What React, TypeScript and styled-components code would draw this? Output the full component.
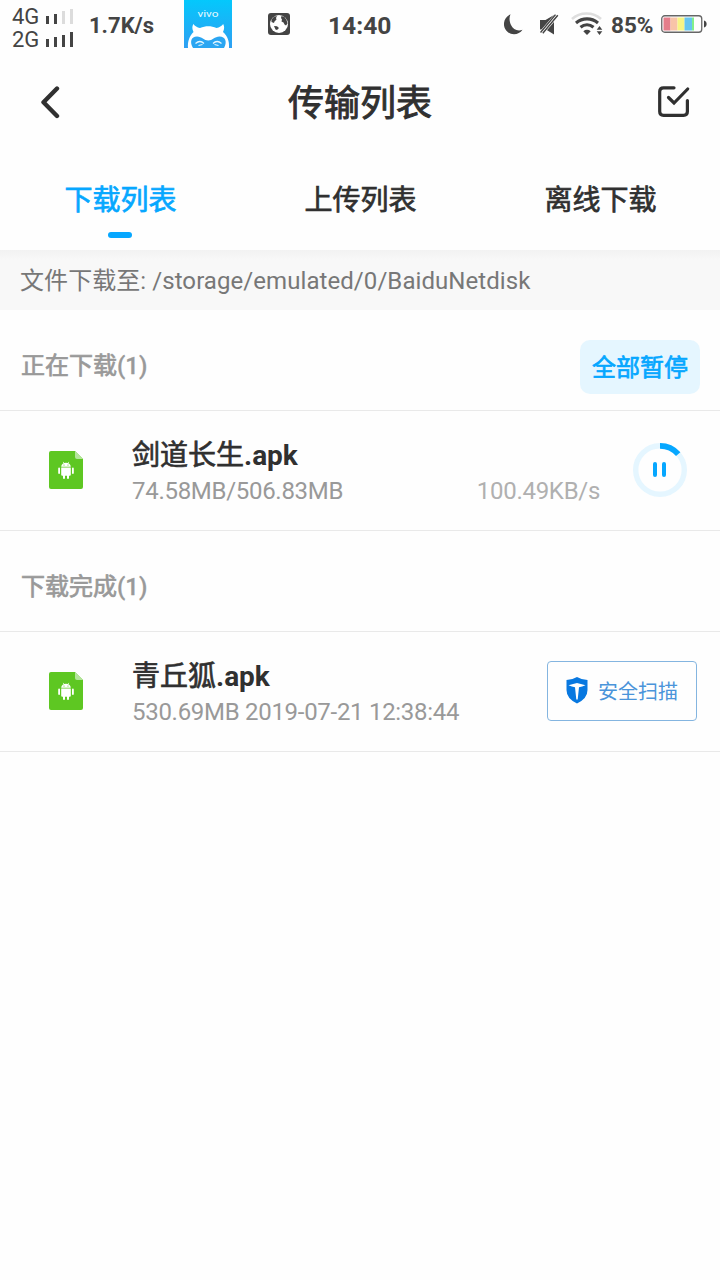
import React from 'react';
import styled, { createGlobalStyle } from 'styled-components';

const GlobalStyle = createGlobalStyle`
  * { box-sizing: border-box; }
  body {
    margin: 0;
    background: #fefefe;
    font-family: Roboto, "Noto Sans CJK SC", sans-serif;
    color: #303030;
  }
  svg { display: block; flex: none; }
`;

const Screen = styled.div`
  width: 720px;
  height: 1280px;
  overflow: hidden;
  background: #fefefe;
`;

/* Medium-weight Chinese text: the regular face with a thin outline. */
const Han = styled.span<{ $stroke?: number }>`
  font-weight: 400;
  -webkit-text-stroke: ${(p) => p.$stroke ?? 0.7}px currentColor;
`;

const StatusBar = styled.div`
  display: flex;
  align-items: flex-start;
  height: 50px;
  padding-left: 12px;
  color: #444;
`;

const StatusItem = styled.div<{ $w: number; $top: number; $left?: number }>`
  flex: none;
  width: ${(p) => p.$w}px;
  margin-top: ${(p) => p.$top}px;
  margin-left: ${(p) => p.$left ?? 0}px;
`;

const StatusText = styled(StatusItem)<{ $size: number }>`
  font-size: ${(p) => p.$size}px;
  line-height: 30px;
  font-weight: 700;
  white-space: nowrap;
`;

const SignalRow = styled.div`
  display: flex;
  align-items: center;
  height: 23px;
  font-size: 22px;
  line-height: 23px;
`;

const SignalName = styled.span`
  width: 34px;
`;

const Bars = styled.div`
  display: flex;
  align-items: flex-end;
  gap: 5px;
  height: 15px;
`;

const Bar = styled.i<{ $h: number; $off?: boolean }>`
  width: 3px;
  height: ${(p) => p.$h}px;
  background: ${(p) => (p.$off ? '#dcdcdc' : '#444')};
`;

const Header = styled.header`
  display: flex;
  align-items: center;
  justify-content: space-between;
  height: 104px;
  padding: 0 28px 0 39px;
`;

const Title = styled.h1`
  margin: 0;
  padding: 4px 0 0 1px;
  font-size: 36px;
  line-height: 52px;
`;

const Tabs = styled.nav`
  display: grid;
  grid-template-columns: repeat(3, 1fr);
  height: 96px;
`;

const Tab = styled.div<{ $active?: boolean }>`
  display: flex;
  flex-direction: column;
  align-items: center;
  padding: 27px 0 0 1px;
  font-size: 28px;
  line-height: 40px;
  color: ${(p) => (p.$active ? '#06a7ff' : '#303030')};
`;

const Indicator = styled.i`
  width: 24px;
  height: 6px;
  margin: 11px 1px 0 0;
  border-radius: 3px;
  background: #06a7ff;
`;

const PathBar = styled.div`
  height: 60px;
  padding: 1px 20px 0;
  background: linear-gradient(#f2f2f2, #f8f8f8 10px);
  font-size: 24px;
  line-height: 60px;
  letter-spacing: 0.07px;
  color: #777;
  white-space: nowrap;
`;

const Section = styled.div`
  display: flex;
  align-items: center;
  justify-content: space-between;
  height: 101px;
  padding: 13px 20px 0 21px;
  border-bottom: 1px solid #e9e9e9;
`;

const SectionTitle = styled.div`
  padding-bottom: 2px;
  font-size: 24px;
  line-height: 36px;
  font-weight: 500;
  color: #999;
  -webkit-text-stroke: 0.3px currentColor;
`;

const PauseAll = styled.button`
  width: 120px;
  height: 54px;
  padding: 2px 0 0;
  border: 0;
  border-radius: 10px;
  background: #e5f6ff;
  color: #06a7ff;
  font-family: inherit;
  font-size: 24px;
  line-height: 52px;
`;

const FileRow = styled.div`
  display: flex;
  align-items: center;
  height: 120px;
  padding: 0 23px 2px 49px;
  border-bottom: 1px solid #e9e9e9;
`;

const FileInfo = styled.div`
  flex: 1;
  margin-left: 49px;
`;

const FileName = styled.div`
  padding-top: 3px;
  font-size: 28px;
  line-height: 39px;
  font-weight: 700;
  white-space: nowrap;
`;

const FileMeta = styled.div`
  display: flex;
  justify-content: space-between;
  font-size: 24px;
  line-height: 32px;
  letter-spacing: -0.29px;
  color: #999;
  white-space: nowrap;
`;

const Speed = styled.span`
  color: #b0b0b0;
`;

const ProgressBox = styled.div`
  margin-left: 33px;
  margin-right: 10px;
`;

const ScanButton = styled.button`
  display: flex;
  align-items: center;
  flex: none;
  width: 150px;
  height: 60px;
  padding: 0 0 0 18px;
  border: 1px solid #84b5e0;
  border-radius: 4px;
  background: #fefefe;
  color: #4a94da;
  font-family: inherit;
  font-size: 20px;
  line-height: 30px;
  gap: 10px;
`;

const ScanLabel = styled.span`
  padding-top: 3px;
`;

const Vivo = () => (
  <svg width="48" height="48" viewBox="0 0 48 48">
    <defs>
      <linearGradient id="sky" x1="0" y1="0" x2="0" y2="1">
        <stop offset="0" stopColor="#04c8fc" />
        <stop offset="1" stopColor="#2f9ff2" />
      </linearGradient>
    </defs>
    <rect width="48" height="48" fill="url(#sky)" />
    <text x="24" y="17.300" textAnchor="middle" fontFamily="Roboto, sans-serif" fontSize="8.500" textLength="21" lengthAdjust="spacingAndGlyphs" fill="#e8faff">vivo</text>
    <path d="M4 48C3.500 41 5.500 36 9.500 32C8 29 8 26.500 9.300 24C11 26 13 27.500 16 28C21.500 25.700 27 25.700 32.500 28C35.500 27.500 37.500 26 39.200 24C40.500 26.500 40.500 29 39 32C43.500 36 45.500 41 45 48Z" fill="#fff" />
    <path d="M9 48C5.500 42 7 36.500 13 36.500C18 36.500 20 40.500 24.300 40.500C28.500 40.500 30.500 36.500 35.500 36.500C41.500 36.500 43.500 42 40 48Z" fill="#2ba6f2" />
    <path d="M11.500 43.500Q16 39.500 20 43.500M29 43.500Q33 39.500 37.500 43.500M14.500 45.500L18.500 44.500M30.500 44.500L34.500 45.500" fill="none" stroke="#e5f7ff" strokeWidth="1.200" />
  </svg>
);

const Globe = () => (
  <svg width="22" height="22" viewBox="0 0 22 22">
    <rect width="22" height="22" rx="3" fill="#444" />
    <circle cx="11" cy="11" r="9" fill="#fff" />
    <path d="M3.500 6.500L6 3.800L9 3L8 5L8.500 6.500L6.500 8.500L6 10L3.500 9ZM13.500 3L16.500 4L18.500 7L19.500 10.500L18 12.500L16.500 11.500L15.500 9.500L13.500 8.500L14 6.500L13 5ZM6 13L9 13.300L11 15L9 17L7.500 16.500Z" fill="#444" />
  </svg>
);

const Moon = () => (
  <svg width="19" height="21" viewBox="0 0 19 21">
    <path d="M6.500 .3C-1.500 4-2 14 4 18.300C8.500 21.700 15.500 20.500 18.500 15.800C13.500 17.500 9 15.500 7 11C5.300 7 5 3.500 6.500 .3Z" fill="#444" />
  </svg>
);

const Muted = () => (
  <svg width="20" height="21" viewBox="0 0 20 21">
    <path d="M0 6H5.500L14 1V20.500L6 15.500H0Z" fill="#444" />
    <path d="M1 19.700L17.500 .3" stroke="#fefefe" strokeWidth="4.600" />
    <path d="M.5 18.500L15.500 .6M2.800 19.300L17.800 1.200" stroke="#444" strokeWidth="1.400" />
  </svg>
);

const Wifi = () => (
  <svg width="32" height="24" viewBox="0 0 32 24" fill="none">
    <path d="M1 7C9-.3 22-.3 30 7" stroke="#dedede" strokeWidth="2.600" />
    <path d="M5 11C11.500 5.500 20.500 5.500 27 11M9.500 15.300C13.500 12 18.500 12 22.500 15.300" stroke="#444" strokeWidth="3.100" />
    <path d="M12.300 19.200Q16 16.500 19.700 19.200L16 23Z" fill="#444" />
    <path d="M28.500 14L31.300 17.800H25.700ZM25.700 19.300H31.300L28.500 23Z" fill="#444" />
  </svg>
);

const Battery = () => (
  <svg width="46" height="18" viewBox="0 0 46 18">
    <rect x="2.500" y="2.500" width="7" height="13" fill="#e47d8a" />
    <rect x="9.500" y="2.500" width="7" height="13" fill="#f8c4a8" />
    <rect x="16.500" y="2.500" width="7" height="13" fill="#f8f584" />
    <rect x="23.500" y="2.500" width="7.500" height="13" fill="#67c5f0" />
    <rect x="31" y="2.500" width="2" height="13" fill="#82f08a" />
    <rect x=".75" y=".75" width="40" height="16.500" rx="3" fill="none" stroke="#666" strokeWidth="1.300" />
    <path d="M43 5.500C46.500 6 46.500 12 43 12.500Z" fill="#444" />
  </svg>
);

const BackIcon = () => (
  <svg width="22" height="34" viewBox="0 0 22 34">
    <path d="M18 3.500L4.500 17.200L18 31" fill="none" stroke="#303030" strokeWidth="4.400" strokeLinecap="round" strokeLinejoin="round" />
  </svg>
);

const SelectIcon = () => (
  <svg width="34" height="34" viewBox="0 0 34 34" fill="none" stroke="#303030" strokeWidth="3.200" strokeLinecap="round" strokeLinejoin="round">
    <path d="M16 2.800H5.500Q1.700 2.800 1.700 6.500V26.500Q1.700 30.300 5.500 30.300H25.500Q29.400 30.300 29.400 26.500V15.500" />
    <path d="M10.500 12.500L16 18L29.700 4" strokeLinejoin="miter" />
  </svg>
);

const ApkIcon = () => (
  <svg width="34" height="38" viewBox="0 0 34 38">
    <path d="M2 0H26L34 8V36Q34 38 32 38H2Q0 38 0 36V2Q0 0 2 0Z" fill="#5ec722" />
    <path d="M26 0L34 8H28Q26 8 26 6Z" fill="#b4e59b" />
    <path d="M15 12.500L14.300 10.900M19 12.500L19.700 10.900" stroke="#fff" strokeWidth=".7" fill="none" />
    <path d="M12.200 15.800C12.400 10.300 21.600 10.300 21.800 15.800ZM12.200 16.600H21.800V23.700Q21.800 24.800 20.800 24.800H20V27Q20 28 19 28Q18 28 18 27V24.800H16V27Q16 28 15 28Q14 28 14 27V24.800H13.200Q12.200 24.800 12.200 23.700Z" fill="#fff" />
    <path d="M10.100 17.500V22M23.900 17.500V22" stroke="#fff" strokeWidth="1.800" strokeLinecap="round" />
    <circle cx="15" cy="14" r=".6" fill="#5ec722" />
    <circle cx="19" cy="14" r=".6" fill="#5ec722" />
  </svg>
);

const ProgressIcon = () => (
  <svg width="54" height="54" viewBox="0 0 54 54" fill="none">
    <circle cx="27" cy="27" r="24.300" stroke="#e5f6ff" strokeWidth="5.400" />
    <path d="M27 2.900A24.100 24.100 0 0 1 45.200 11.200" stroke="#06a7ff" strokeWidth="5.800" />
    <path d="M22 21V32M31 21V32" stroke="#06a7ff" strokeWidth="4" strokeLinecap="round" />
  </svg>
);

const ShieldIcon = () => (
  <svg width="22" height="27" viewBox="0 0 22 27">
    <path d="M11 0Q16 3 21.500 3V13Q21.500 21.500 11 26.500Q.5 21.500 .5 13V3Q6 3 11 0Z" fill="#0878e0" />
    <path d="M2.500 8.300Q7.500 6.800 11 6Q14.500 6.800 19.500 8.300Q16 10 13 10.300L11.700 22.500H10.300L9 10.300Q6 10 2.500 8.300Z" fill="#fff" />
  </svg>
);

export default function App() {
  return (
    <>
      <GlobalStyle />
      <Screen>
        <StatusBar>
          <StatusItem $w={64} $top={5}>
            <SignalRow>
              <SignalName>4G</SignalName>
              <Bars><Bar $h={8} /><Bar $h={10} /><Bar $h={13} $off /><Bar $h={15} $off /></Bars>
            </SignalRow>
            <SignalRow>
              <SignalName>2G</SignalName>
              <Bars><Bar $h={8} /><Bar $h={10} /><Bar $h={12} /><Bar $h={15} /></Bars>
            </SignalRow>
          </StatusItem>
          <StatusText $w={80} $top={11} $left={13} $size={22}>1.7K/s</StatusText>
          <StatusItem $w={48} $top={0} $left={15}><Vivo /></StatusItem>
          <StatusItem $w={22} $top={13} $left={36}><Globe /></StatusItem>
          <StatusText $w={70} $top={11} $left={38} $size={24.6}>14:40</StatusText>
          <StatusItem $w={19} $top={14} $left={106}><Moon /></StatusItem>
          <StatusItem $w={20} $top={14} $left={17}><Muted /></StatusItem>
          <StatusItem $w={32} $top={12} $left={11}><Wifi /></StatusItem>
          <StatusText $w={44} $top={10} $left={8} $size={22.5}>85%</StatusText>
          <StatusItem $w={46} $top={15} $left={6}><Battery /></StatusItem>
        </StatusBar>

        <Header>
          <BackIcon />
          <Title><Han $stroke={0.9}>传输列表</Han></Title>
          <SelectIcon />
        </Header>

        <Tabs>
          <Tab $active><Han>下载列表</Han><Indicator /></Tab>
          <Tab><Han>上传列表</Han></Tab>
          <Tab><Han>离线下载</Han></Tab>
        </Tabs>

        <PathBar>文件下载至: /storage/emulated/0/BaiduNetdisk</PathBar>

        <Section>
          <SectionTitle><Han>正在下载</Han>(1)</SectionTitle>
          <PauseAll><Han>全部暂停</Han></PauseAll>
        </Section>

        <FileRow>
          <ApkIcon />
          <FileInfo>
            <FileName><Han>剑道长生</Han>.apk</FileName>
            <FileMeta><span>74.58MB/506.83MB</span><Speed>100.49KB/s</Speed></FileMeta>
          </FileInfo>
          <ProgressBox><ProgressIcon /></ProgressBox>
        </FileRow>

        <Section>
          <SectionTitle><Han>下载完成</Han>(1)</SectionTitle>
        </Section>

        <FileRow>
          <ApkIcon />
          <FileInfo>
            <FileName><Han>青丘狐</Han>.apk</FileName>
            <FileMeta><span>530.69MB 2019-07-21 12:38:44</span></FileMeta>
          </FileInfo>
          <ScanButton><ShieldIcon /><ScanLabel>安全扫描</ScanLabel></ScanButton>
        </FileRow>
      </Screen>
    </>
  );
}
